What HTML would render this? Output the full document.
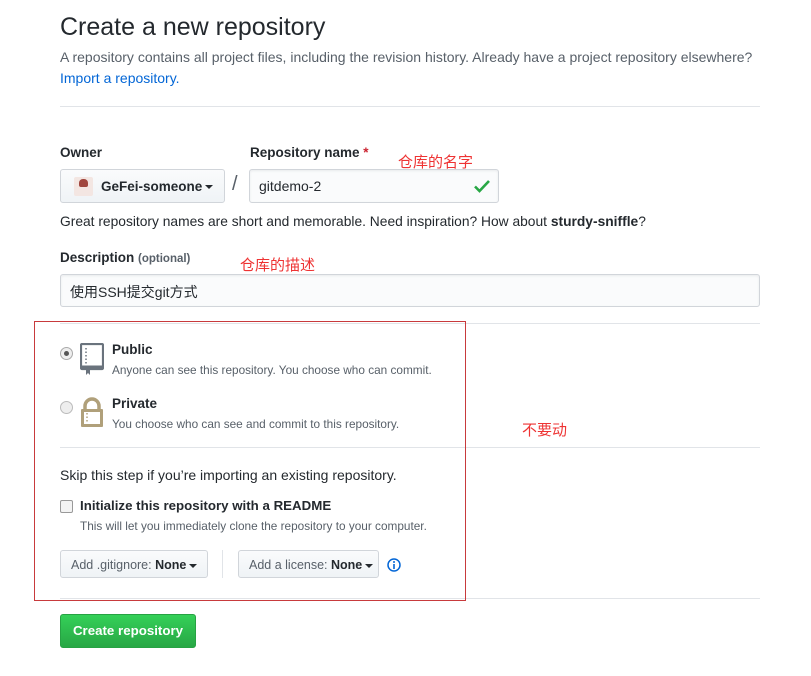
<!DOCTYPE html>
<html><head><meta charset="utf-8"><style>
body{margin:0;width:811px;height:676px;background:#fff;font-family:"Liberation Sans","Noto Sans CJK SC",sans-serif;color:#24292e;position:relative;overflow:hidden}
.a{position:absolute;white-space:nowrap}
.hr{position:absolute;height:1px;background:#e1e4e8}
.red{color:#e33;font-size:15px;font-family:"Noto Sans CJK SC",sans-serif}
.btn{position:absolute;border:1px solid #d1d5da;border-radius:3px;background:linear-gradient(#fafbfc,#eff3f6);box-sizing:border-box;font-size:12.5px;color:#586069}
.caret{display:inline-block;width:0;height:0;border-left:4px solid transparent;border-right:4px solid transparent;border-top:4px solid #24292e;vertical-align:middle;margin-left:3px}
.inp{position:absolute;border:1px solid #d1d5da;border-radius:3px;background:#fafbfc;box-sizing:border-box;font-size:14px;box-shadow:inset 0 1px 2px rgba(27,31,35,.075)}
.sm{font-size:11.8px;color:#586069}
</style></head><body>
<div class="a" style="left:60px;top:13px;font-size:25px;font-weight:300;color:#24292e">Create a new repository</div>
<div class="a" style="left:60px;top:49px;font-size:14px;color:#586069">A repository contains all project files, including the revision history. Already have a project repository elsewhere?</div>
<div class="a" style="left:60px;top:70px;font-size:14px;color:#0366d6">Import a repository.</div>
<div class="hr" style="left:60px;top:106px;width:700px"></div>

<div class="a" style="left:60px;top:145px;font-size:13.5px;font-weight:bold;color:#24292e">Owner</div>
<div class="a" style="left:250px;top:145px;font-size:13.5px;font-weight:bold">Repository name <span style="color:#cb2431">*</span></div>
<div class="a red" style="left:398px;top:151px">仓库的名字</div>
<div class="btn" style="left:60px;top:169px;width:165px;height:34px;font-size:13.5px;color:#24292e;font-weight:bold">
 <div style="position:absolute;left:13px;top:7px;width:19px;height:19px;background:#f3e6e2;border-radius:2px"><div style="margin:2px 5px;width:9px;height:8px;background:#a0463e;border-radius:4px 4px 2px 2px"></div></div>
 <span style="position:absolute;left:40px;top:9px">GeFei-someone<span class="caret"></span></span></div>
<div class="a" style="left:232px;top:173px;font-size:20px;color:#586069">/</div>
<div class="inp" style="left:249px;top:169px;width:250px;height:34px"><span style="position:absolute;left:9px;top:8px">gitdemo-2</span>
<svg style="position:absolute;right:8px;top:9px" width="16" height="14" viewBox="0 0 16 14"><path d="M1 7.5l4.5 4.5L15 2" fill="none" stroke="#28a745" stroke-width="2.6"/></svg></div>
<div class="a" style="left:60px;top:214px;font-size:13.8px">Great repository names are short and memorable. Need inspiration? How about <b>sturdy-sniffle</b>?</div>

<div class="a" style="left:60px;top:250px;font-size:13.5px;font-weight:bold">Description <span style="font-weight:bold;font-size:11.5px;color:#586069">(optional)</span></div>
<div class="a red" style="left:240px;top:254px">仓库的描述</div>
<div class="inp" style="left:60px;top:274px;width:700px;height:33px"><span style="position:absolute;left:9px;top:7px;font-family:'Liberation Sans','Noto Sans CJK SC',sans-serif">使用SSH提交git方式</span></div>
<div class="hr" style="left:60px;top:323px;width:700px"></div>

<div class="a" style="left:60px;top:347px;width:11px;height:11px;border:1px solid #aaa;border-radius:50%;background:#eee"><div style="margin:3px;width:5px;height:5px;border-radius:50%;background:#555"></div></div>
<svg class="a" style="left:80px;top:343px" width="24" height="32" viewBox="0 0 24 32"><rect x="1" y="1" width="22" height="25" rx="1" fill="none" stroke="#6a737d" stroke-width="2.2"/><path d="M1 24h22" stroke="#6a737d" stroke-width="3"/><path d="M6 5v16" stroke="#6a737d" stroke-width="1.5" stroke-dasharray="1.5 2"/><path d="M6 26v6l2-2 2 2v-6z" fill="#6a737d"/></svg>
<div class="a" style="left:112px;top:342px;font-size:13.5px;font-weight:bold">Public</div>
<div class="a sm" style="left:112px;top:363px">Anyone can see this repository. You choose who can commit.</div>

<div class="a" style="left:60px;top:401px;width:11px;height:11px;border:1px solid #bbb;border-radius:50%;background:#eee"></div>
<svg class="a" style="left:80px;top:397px" width="24" height="31" viewBox="0 0 24 31"><path d="M5 13V9a7 7 0 0 1 14 0v4" fill="none" stroke="#b0a07a" stroke-width="3.5"/><rect x="1" y="12" width="22" height="18" rx="1" fill="#b0a07a"/><rect x="4" y="15" width="16" height="12" fill="#fff"/><path d="M7 16v10" stroke="#b0a07a" stroke-width="1.5" stroke-dasharray="1.5 2"/></svg>
<div class="a" style="left:112px;top:396px;font-size:13.5px;font-weight:bold">Private</div>
<div class="a sm" style="left:112px;top:417px">You choose who can see and commit to this repository.</div>
<div class="a red" style="left:522px;top:419px">不要动</div>
<div class="hr" style="left:60px;top:447px;width:700px"></div>

<div class="a" style="left:60px;top:467px;font-size:14px">Skip this step if you’re importing an existing repository.</div>
<div class="a" style="left:60px;top:500px;width:11px;height:11px;border:1px solid #999;border-radius:2px;background:#f3f3f3"></div>
<div class="a" style="left:80px;top:498px;font-size:13.3px;font-weight:bold">Initialize this repository with a README</div>
<div class="a sm" style="left:80px;top:519px">This will let you immediately clone the repository to your computer.</div>
<div class="btn" style="left:60px;top:550px;width:148px;height:28px"><span style="position:absolute;left:10px;top:7px">Add .gitignore: <b style="color:#24292e">None</b><span class="caret"></span></span></div>
<div class="a" style="left:222px;top:550px;width:1px;height:28px;background:#e1e4e8"></div>
<div class="btn" style="left:238px;top:550px;width:141px;height:28px"><span style="position:absolute;left:10px;top:7px">Add a license: <b style="color:#24292e">None</b><span class="caret"></span></span></div>
<svg class="a" style="left:387px;top:558px" width="14" height="14" viewBox="0 0 14 14"><circle cx="7" cy="7" r="6" fill="none" stroke="#0366d6" stroke-width="1.5"/><circle cx="7" cy="4" r="1" fill="#0366d6"/><path d="M7 6v5" stroke="#0366d6" stroke-width="1.6"/></svg>
<div class="hr" style="left:60px;top:598px;width:700px"></div>

<div class="a" style="left:34px;top:321px;width:430px;height:278px;border:1px solid #c83a3c"></div>

<div class="a" style="left:60px;top:614px;width:136px;height:34px;border-radius:3px;background:linear-gradient(#34d058,#28a745);border:1px solid #27a243;box-sizing:border-box;color:#fff;font-weight:bold;font-size:13.3px;text-align:center;line-height:32px">Create repository</div>
</body></html>
